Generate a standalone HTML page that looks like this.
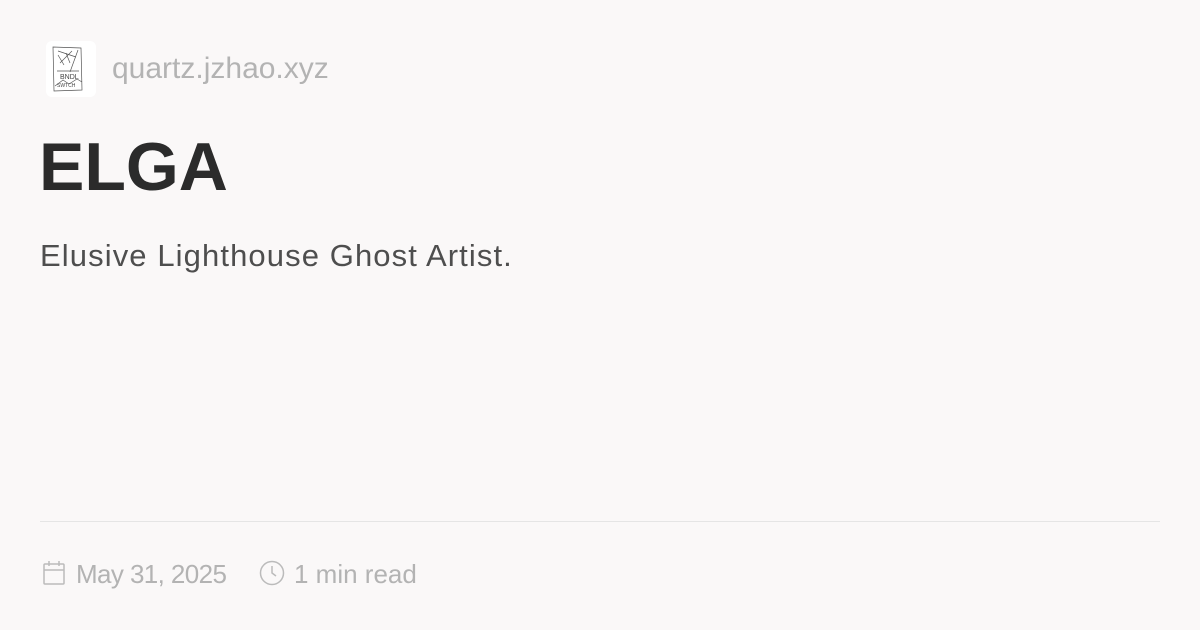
<!DOCTYPE html>
<html><head><style>
body{margin:0;width:1200px;height:630px;background:#faf8f8;font-family:"Liberation Sans",sans-serif;position:relative;overflow:hidden}
.t{position:absolute;white-space:nowrap}
</style></head><body>
<div style="position:absolute;left:46px;top:41px;width:50px;height:56px;background:#fff;border-radius:6px"></div>
<svg style="position:absolute;left:46px;top:41px" width="50" height="56" viewBox="0 0 50 56" fill="none" stroke="#555" stroke-width="0.7">
<path d="M7 6l28 1 1 42-28 1z"/><path d="M12 10l18 6M14 22l12-12M32 9l-8 22M11 30h22M9 45l8-6 6 4 8-5 5 3M12 14l6 10M20 12l4 10"/><text x="14" y="38" font-size="7" fill="#444" stroke="none">BNDL</text><text x="11" y="46" font-size="5" fill="#444" stroke="none">SWTCH</text>
</svg>
<div class="t" style="left:112px;top:52px;font-size:30px;color:#b3b3b3">quartz.jzhao.xyz</div>
<div class="t" style="left:39px;top:128px;font-size:68px;font-weight:bold;color:#2b2b2b">ELGA</div>
<div class="t" style="left:40px;top:238px;font-size:31px;letter-spacing:1.1px;color:#4e4e4e">Elusive Lighthouse Ghost Artist.</div>
<div style="position:absolute;left:40px;top:521px;width:1120px;height:1px;background:#e5e5e5"></div>
<svg style="position:absolute;left:42px;top:560px" width="24" height="26" viewBox="0 0 24 26" fill="none" stroke="#bbb" stroke-width="1.5"><rect x="2" y="4" width="20" height="20" rx="1"/><path d="M2 10h20M7 1v5M17 1v5"/></svg>
<div class="t" style="left:76px;top:559px;font-size:26px;letter-spacing:-0.6px;color:#b3b3b3">May 31, 2025</div>
<svg style="position:absolute;left:259px;top:560px" width="26" height="26" viewBox="0 0 26 26" fill="none" stroke="#bbb" stroke-width="1.5"><circle cx="13" cy="13" r="11.5"/><path d="M13 6v7l4 3"/></svg>
<div class="t" style="left:294px;top:559px;font-size:26px;color:#b3b3b3">1 min read</div>
</body></html>
